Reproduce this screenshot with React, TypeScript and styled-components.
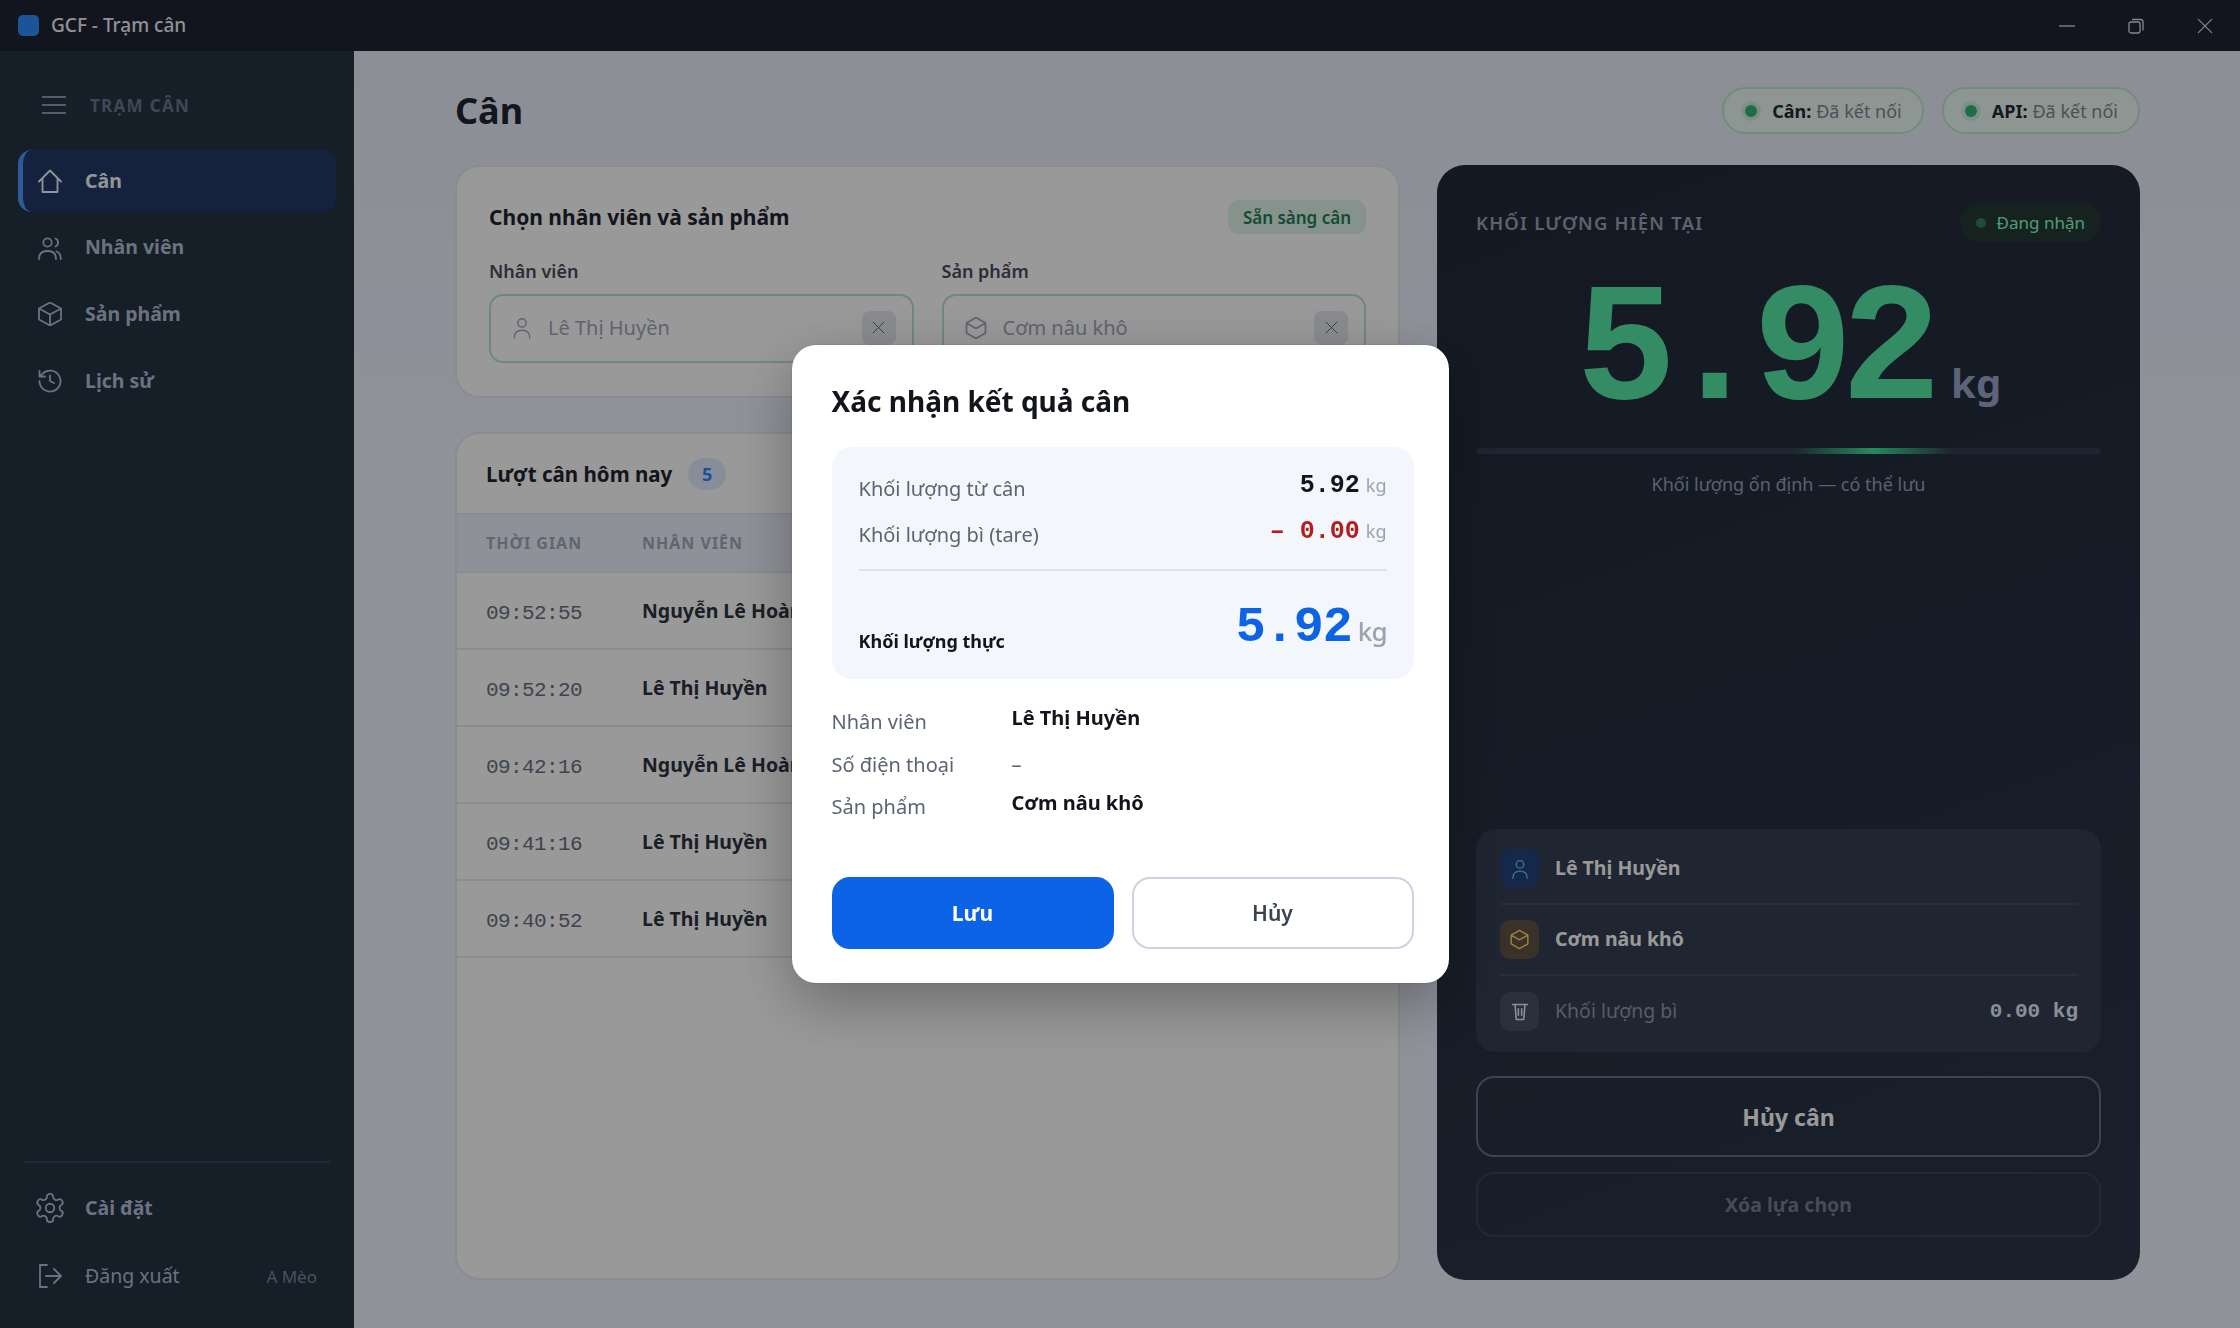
import React from "react";
import styled, {createGlobalStyle} from "styled-components";

const SANS = `"Noto Sans", "Liberation Sans", sans-serif`;
const MONO = `"Liberation Mono", "DejaVu Sans Mono", monospace`;

const GlobalStyle = createGlobalStyle`
  html, body {
    margin: 0;
    padding: 0;
    height: 100%;
    overflow: hidden;
    background: #eef3ff;
    font-family: ${SANS};
  }
  * {
    box-sizing: border-box;
  }
`;

const Stroke = ({size = 24, width = 1.8, children}: { size?: number; width?: number; children: React.ReactNode }) => (
    <svg width={size} height={size} viewBox="0 0 24 24" fill="none" stroke="currentColor" strokeWidth={width}
         strokeLinecap="round" strokeLinejoin="round">
        {children}
    </svg>
);

const HomeIcon = () => <Stroke><path d="M1 12.500 12 1.500 23 12.500M4.500 9.500V23h15V9.500"/></Stroke>;
const UsersIcon = () => (
    <Stroke>
        <circle cx="9.500" cy="6.500" r="4.200"/>
        <path d="M1 23c0-5.500 3.600-8 8.500-8s8.500 2.500 8.500 8M17.500 2.500a4.400 4.400 0 0 1 0 8M18.500 15.500c2.800.8 4.300 3.200 4.300 7.500"/>
    </Stroke>
);
const BoxIcon = () => <Stroke><path d="M12 .5 23 6.500v11L12 23.500 1 17.500v-11zM1 6.500l11 6 11-6M12 12.500v11"/></Stroke>;
const HistoryIcon = () => (
    <Stroke>
        <path d="M1.500 12a10.500 10.500 0 1 0 3.100-7.400L1.500 7.500M1.500 2v5.500H7M12 6.500V12l4 2"/>
    </Stroke>
);
const GearIcon = () => (
    <Stroke size={34} width={1.300}>
        <path d="M12.200 2h-.4a2 2 0 0 0-2 2v.2a2 2 0 0 1-1 1.700l-.4.300a2 2 0 0 1-2 0l-.2-.1a2 2 0 0 0-2.700.7l-.2.400a2 2 0 0 0 .7 2.700l.2.100a2 2 0 0 1 1 1.700v.5a2 2 0 0 1-1 1.700l-.2.100a2 2 0 0 0-.7 2.700l.2.400a2 2 0 0 0 2.700.7l.2-.1a2 2 0 0 1 2 0l.4.300a2 2 0 0 1 1 1.700v.2a2 2 0 0 0 2 2h.4a2 2 0 0 0 2-2v-.2a2 2 0 0 1 1-1.700l.4-.3a2 2 0 0 1 2 0l.2.100a2 2 0 0 0 2.700-.7l.2-.4a2 2 0 0 0-.7-2.700l-.2-.1a2 2 0 0 1-1-1.700v-.5a2 2 0 0 1 1-1.700l.2-.1a2 2 0 0 0 .7-2.700l-.2-.4a2 2 0 0 0-2.700-.7l-.2.100a2 2 0 0 1-2 0l-.4-.3a2 2 0 0 1-1-1.700V4a2 2 0 0 0-2-2z"/>
        <circle cx="12" cy="12" r="3"/>
    </Stroke>
);
const LogoutIcon = () => (
    <Stroke>
        <path d="M9 1H2v22h7M8 12h15M16 5l7 7-7 7"/>
    </Stroke>
);
const MenuIcon = () => <Stroke width={1.6}><path d="M0.500 4h23M0.500 12h23M0.500 20h23"/></Stroke>;
const PersonIcon = ({size = 22}: { size?: number }) => (
    <Stroke size={size} width={1.600}>
        <circle cx="12" cy="6.500" r="4.500"/>
        <path d="M3.500 23c0-6 3.500-8.500 8.500-8.500s8.500 2.500 8.500 8.500"/>
    </Stroke>
);
const ProductIcon = ({size = 24}: { size?: number }) => (
    <Stroke size={size} width={1.700}>
        <path d="M12 1.500 21.500 7v10L12 22.500 2.500 17V7zM2.500 7 12 12.500 21.500 7"/>
    </Stroke>
);
const TareIcon = () => (
    <Stroke size={20} width={1.900}>
        <path d="M3 3h18M6 3l1.500 18h9L18 3M10 8v8M14 8v8"/>
    </Stroke>
);
const CloseIcon = ({size = 13}: { size?: number }) => (
    <Stroke size={size} width={1.800}><path d="M2 2l20 20M22 2 2 22"/></Stroke>
);

const Shell = styled.div`
  display: flex;
  flex-direction: column;
  width: 2240px;
  height: 1328px;
`;

const TitleBar = styled.header`
  flex: 0 0 51px;
  display: flex;
  align-items: center;
  background: #1e2332;
  padding-left: 18px;
`;

const AppLogo = styled.span`
  width: 21px;
  height: 21px;
  border-radius: 5px;
  background: #2f8cff;
  margin-right: 12px;
`;

const AppTitle = styled.span`
  font-size: 19px;
  font-weight: 500;
  margin-bottom: 2px;
  color: #f0f2f8;
`;

const WindowControls = styled.div`
  margin-left: auto;
  display: flex;
  height: 100%;
  padding-right: 1px;
`;

const WindowButton = styled.span`
  width: 69px;
  display: flex;
  align-items: center;
  justify-content: center;
  color: #dfe3ee;
`;

const Body = styled.div`
  flex: 1;
  display: flex;
  min-height: 0;
`;

const Sidebar = styled.aside`
  flex: 0 0 354px;
  display: flex;
  flex-direction: column;
  background: #263244;
  padding: 24px 18px 21px;
`;

const SidebarHead = styled.div`
  height: 60px;
  display: flex;
  align-items: center;
  gap: 24px;
  padding-left: 24px;
  margin-bottom: 15px;
  color: #b2bed5;
`;

const SidebarLabel = styled.span`
  font-size: 17px;
  font-weight: 700;
  letter-spacing: 1.300px;
  color: #69788e;
`;

const NavList = styled.nav<{ $bottom?: boolean }>`
  display: flex;
  flex-direction: column;
  gap: ${p => (p.$bottom ? "6px" : "4.700px")};
`;

const NavItem = styled.a<{ $active?: boolean; $quiet?: boolean }>`
  height: 62px;
  display: flex;
  align-items: center;
  gap: 23px;
  padding: 0 19px 0 15px;
  border-radius: 14px;
  border-left: 5px solid ${p => (p.$active ? "#4d96ff" : "transparent")};
  background: ${p => (p.$active ? "#233a66" : "transparent")};
  color: ${p => (p.$active ? "#f5f7fb" : "#b2bed5")};
  font-size: 19.500px;
  font-weight: ${p => (p.$quiet ? 400 : 700)};
`;

const NavIcon = styled.span`
  width: 24px;
  height: 24px;
  display: flex;
  align-items: center;
  justify-content: center;

  svg {
    flex: none;
  }
`;

const NavText = styled.span`
  margin-bottom: 2px;
`;

const SidebarFoot = styled.div`
  margin-top: auto;
`;

const SidebarRule = styled.div`
  height: 2px;
  margin: 0 6px 14px;
  background: #3a4558;
`;

const UserName = styled.span`
  margin-left: auto;
  font-size: 17px;
  font-weight: 400;
  color: #7c889c;
`;

const Main = styled.main`
  flex: 1;
  display: flex;
  flex-direction: column;
  min-width: 0;
  padding: 36px 100px 48px 101px;
  background: linear-gradient(#e8edf8, #eef3ff 30%);
`;

const PageHead = styled.div`
  height: 47px;
  display: flex;
  align-items: center;
  justify-content: space-between;
  margin-bottom: 31px;
`;

const PageTitle = styled.h1`
  margin: 0;
  font-size: 36px;
  font-weight: 700;
  color: #212636;
`;

const StatusGroup = styled.div`
  display: flex;
  gap: 18px;
`;

const StatusPill = styled.div`
  height: 47px;
  display: flex;
  align-items: center;
  gap: 15px;
  padding: 0 20px 0 21px;
  border-radius: 24px;
  border: 2px solid #bfe8d0;
  background: #edfaf6;
  font-size: 18px;
  color: #7f8593;

  b {
    font-weight: 700;
    color: #252a34;
    margin-right: 5px;
  }
`;

const StatusDot = styled.span`
  width: 12px;
  height: 12px;
  border-radius: 50%;
  background: #2db776;
  box-shadow: 0 0 0 4px rgba(45, 183, 118, 0.15);
`;

const Columns = styled.div`
  flex: 1;
  display: grid;
  grid-template-columns: 945px 703px;
  gap: 37px;
  min-height: 0;
`;

const LeftColumn = styled.div`
  display: flex;
  flex-direction: column;
  gap: 34px;
  min-height: 0;
`;

const Card = styled.section`
  background: #fff;
  border: 2px solid #e6e9f3;
  border-radius: 24px;
`;

const PickCard = styled(Card)`
  padding: 33px 32px;
`;

const PickHead = styled.div`
  display: flex;
  align-items: center;
  justify-content: space-between;
  height: 34px;
  margin-bottom: 25px;
`;

const CardTitle = styled.h2<{ $small?: boolean }>`
  margin: 0;
  font-size: ${p => (p.$small ? "20.500px" : "21px")};
  font-weight: 700;
  color: #1f2530;
`;

const ReadyBadge = styled.span`
  height: 34px;
  padding: 0 15px;
  display: flex;
  align-items: center;
  border-radius: 10px;
  background: #dff5ea;
  font-size: 17px;
  font-weight: 600;
  color: #1f7c58;
`;

const Fields = styled.div`
  display: grid;
  grid-template-columns: 1fr 1fr;
  gap: 28px;
`;

const FieldLabel = styled.div`
  font-size: 18px;
  font-weight: 600;
  line-height: 24px;
  margin-bottom: 11px;
  color: #484e5d;
`;

const Picker = styled.div`
  height: 69px;
  display: flex;
  align-items: center;
  gap: 15px;
  padding: 0 16px 2px 20px;
  border: 2px solid #b8e4cc;
  border-radius: 14px;
  color: #a0a7b6;
  font-size: 20px;
`;

const ClearButton = styled.span`
  margin-left: auto;
  width: 34px;
  height: 34px;
  display: flex;
  align-items: center;
  justify-content: center;
  border-radius: 8px;
  background: #e6e8ef;
  color: #646a78;
`;

const HistoryCard = styled(Card)`
  flex: 1;
  overflow: hidden;
`;

const HistoryHead = styled.div`
  height: 81px;
  display: flex;
  align-items: center;
  gap: 16px;
  padding: 0 29px;
  border-bottom: 2px solid #e6e9f3;
`;

const CountBadge = styled.span`
  width: 38px;
  height: 32px;
  display: flex;
  align-items: center;
  justify-content: center;
  border-radius: 16px;
  background: #e1ebff;
  font-size: 18px;
  font-weight: 700;
  color: #3087ff;
`;

const Row = styled.div<{ $head?: boolean }>`
  display: grid;
  grid-template-columns: 156px 1fr;
  align-items: center;
  height: ${p => (p.$head ? "58px" : "77px")};
  padding: 0 29px;
  border-bottom: 2px solid #e6e9f3;
  background: ${p => (p.$head ? "#eef2fd" : "transparent")};
`;

const HeadCell = styled.span`
  font-size: 16px;
  font-weight: 700;
  letter-spacing: 1px;
  color: #9eaabe;
`;

const TimeCell = styled.span`
  font-family: ${MONO};
  font-size: 21px;
  letter-spacing: -0.600px;
  padding-top: 5px;
  color: #6b7184;
`;

const NameCell = styled.span`
  font-size: 19.500px;
  font-weight: 700;
  color: #2d3241;
  white-space: nowrap;
`;

const WeighPanel = styled.section`
  display: flex;
  flex-direction: column;
  padding: 38px 39px 43px;
  border-radius: 28px;
  background: linear-gradient(160deg, #212a39, #2b3549);
`;

const WeighHead = styled.div`
  display: flex;
  align-items: center;
  justify-content: space-between;
`;

const WeighLabel = styled.span`
  font-size: 18.500px;
  font-weight: 600;
  letter-spacing: 1.200px;
  color: #98a3bb;
`;

const LiveBadge = styled.span`
  height: 39px;
  display: flex;
  align-items: center;
  gap: 11px;
  padding: 0 16px;
  border-radius: 20px;
  background: #233a34;
  font-size: 17px;
  color: #84ffc8;
`;

const LiveDot = styled.span`
  width: 10px;
  height: 10px;
  border-radius: 50%;
  background: #347d5c;
`;

const Reading = styled.div`
  display: flex;
  align-items: baseline;
  justify-content: center;
  height: 168px;
  margin: 27px 0 11px;
`;

const ReadingValue = styled.span`
  font-family: ${MONO};
  font-size: 168px;
  line-height: 168px;
  font-weight: 700;
  letter-spacing: -12.500px;
  color: #58e9a7;
`;

const ReadingUnit = styled.span`
  font-size: 40px;
  font-weight: 700;
  color: #98a7c8;
  margin-left: 22px;
`;

const Meter = styled.div`
  position: relative;
  height: 6px;
  border-radius: 3px;
  background: #343e50;
  overflow: hidden;
`;

const MeterGlow = styled.span`
  position: absolute;
  top: 0;
  bottom: 0;
  left: 51%;
  width: 25%;
  background: linear-gradient(90deg, transparent, #3fe79a, transparent);
`;

const Hint = styled.p`
  margin: 17px 0 0;
  text-align: center;
  font-size: 18px;
  line-height: 26px;
  color: #96a2bb;
`;

const InfoBox = styled.div`
  margin-top: auto;
  padding: 5px 23px 5px 24px;
  border-radius: 20px;
  background: #343f52;
`;

const InfoRow = styled.div`
  display: flex;
  align-items: center;
  gap: 16px;
  height: 71px;
  border-bottom: 2px solid #434d60;

  &:last-child {
    border-bottom: 0;
  }
`;

const InfoIcon = styled.span<{ $tone: string; $ink: string }>`
  width: 39px;
  height: 39px;
  display: flex;
  align-items: center;
  justify-content: center;
  border-radius: 10px;
  background: ${p => p.$tone};
  color: ${p => p.$ink};
`;

const InfoText = styled.span<{ $dim?: boolean }>`
  font-size: 19.500px;
  font-weight: ${p => (p.$dim ? 400 : 700)};
  margin-bottom: 2px;
  color: ${p => (p.$dim ? "#8f99af" : "#fff")};
`;

const InfoValue = styled.span`
  margin-left: auto;
  font-family: ${MONO};
  font-size: 21px;
  font-weight: 700;
  color: #e6eeff;
`;

const GhostButton = styled.button<{ $faint?: boolean }>`
  width: 100%;
  height: ${p => (p.$faint ? "65px" : "81px")};
  margin-top: ${p => (p.$faint ? "15px" : "24px")};
  border: 2px solid ${p => (p.$faint ? "#3a4458" : "#646e85")};
  border-radius: 18px;
  background: transparent;
  font-family: ${SANS};
  font-size: ${p => (p.$faint ? "19.500px" : "23px")};
  font-weight: 700;
  color: ${p => (p.$faint ? "#767f91" : "#fff")};
`;

const Backdrop = styled.div`
  position: fixed;
  inset: 0;
  display: flex;
  align-items: center;
  justify-content: center;
  background: rgba(0, 0, 0, 0.4);
`;

const Modal = styled.div`
  width: 657px;
  height: 638px;
  padding: 36px 35px 0 40px;
  border-radius: 24px;
  background: #fff;
  box-shadow: 0 20px 60px rgba(0, 0, 0, 0.3), 0 0 0 1px rgba(0, 0, 0, 0.05);
`;

const ModalTitle = styled.h2`
  margin: 0 0 26px;
  font-size: 28px;
  line-height: 40px;
  font-weight: 700;
  color: #12151c;
`;

const Summary = styled.div`
  height: 232px;
  padding: 18px 27px 0;
  border-radius: 20px;
  background: #f3f6fb;
`;

const SummaryRow = styled.div`
  height: 46px;
  display: flex;
  align-items: center;
  justify-content: space-between;
  font-size: 20px;
  color: #5b6473;
`;

const SummaryValue = styled.span<{ $minus?: boolean }>`
  display: flex;
  align-items: baseline;
  gap: 6px;
  margin-top: -6px;
  font-family: ${MONO};
  font-size: 25px;
  font-weight: 700;
  color: ${p => (p.$minus ? "#b51c1c" : "#12151c")};
`;

const SummaryUnit = styled.small<{ $big?: boolean }>`
  font-family: ${SANS};
  font-size: ${p => (p.$big ? "26px" : "18px")};
  font-weight: ${p => (p.$big ? 500 : 400)};
  color: #9aa3b2;
`;

const SummaryRule = styled.div`
  height: 2px;
  margin-top: 12px;
  background: #dde3ec;
`;

const TotalRow = styled.div`
  display: flex;
  align-items: flex-end;
  justify-content: space-between;
  margin-top: 27px;
`;

const TotalLabel = styled.span`
  font-size: 18px;
  line-height: 26px;
  margin-bottom: 7px;
  font-weight: 700;
  color: #12151c;
`;

const TotalValue = styled.span`
  display: flex;
  align-items: baseline;
  gap: 6px;
  font-family: ${MONO};
  font-size: 50px;
  line-height: 60px;
  font-weight: 700;
  letter-spacing: -1px;
  color: #0e63e5;
`;

const Details = styled.dl`
  display: grid;
  grid-template-columns: 180px 1fr;
  grid-auto-rows: 42.500px;
  margin: 21px 0 49px;
  font-size: 20px;
`;

const DetailName = styled.dt`
  margin: 0;
  line-height: 43px;
  color: #5b6473;
`;

const DetailValue = styled.dd<{ $empty?: boolean }>`
  margin: 0;
  line-height: ${p => (p.$empty ? "43px" : "35px")};
  font-weight: ${p => (p.$empty ? 400 : 700)};
  color: ${p => (p.$empty ? "#5b6473" : "#12151c")};
`;

const ModalActions = styled.div`
  display: grid;
  grid-template-columns: 1fr 1fr;
  gap: 18px;
`;

const ModalButton = styled.button<{ $primary?: boolean }>`
  height: 72px;
  border-radius: 18px;
  border: 2px solid ${p => (p.$primary ? "#0d63e5" : "#cdd3e0")};
  background: ${p => (p.$primary ? "#0d63e5" : "#fff")};
  font-family: ${SANS};
  font-size: 21px;
  font-weight: ${p => (p.$primary ? 700 : 600)};
  color: ${p => (p.$primary ? "#fff" : "#3b4350")};
`;

const HISTORY = [
    {time: "09:52:55", name: "Nguyễn Lê Hoàng"},
    {time: "09:52:20", name: "Lê Thị Huyền"},
    {time: "09:42:16", name: "Nguyễn Lê Hoàng"},
    {time: "09:41:16", name: "Lê Thị Huyền"},
    {time: "09:40:52", name: "Lê Thị Huyền"},
];

const App = () => (
    <>
        <GlobalStyle/>
        <Shell>
            <TitleBar>
                <AppLogo/>
                <AppTitle>GCF - Trạm cân</AppTitle>
                <WindowControls>
                    <WindowButton>
                        <svg width="16" height="16" viewBox="0 0 16 16" stroke="currentColor" strokeWidth="1.3">
                            <path d="M0 8h16"/>
                        </svg>
                    </WindowButton>
                    <WindowButton>
                        <svg width="16" height="16" viewBox="0 0 16 16" fill="none" stroke="currentColor" strokeWidth="1.3">
                            <rect x="1" y="4" width="11" height="11" rx="2"/>
                            <path d="M4 1.500h8.500a2.500 2.500 0 0 1 2.500 2.500v8.500"/>
                        </svg>
                    </WindowButton>
                    <WindowButton>
                        <CloseIcon size={16}/>
                    </WindowButton>
                </WindowControls>
            </TitleBar>
            <Body>
                <Sidebar>
                    <SidebarHead>
                        <MenuIcon/>
                        <SidebarLabel>TRẠM CÂN</SidebarLabel>
                    </SidebarHead>
                    <NavList>
                        <NavItem $active><NavIcon><HomeIcon/></NavIcon><NavText>Cân</NavText></NavItem>
                        <NavItem><NavIcon><UsersIcon/></NavIcon><NavText>Nhân viên</NavText></NavItem>
                        <NavItem><NavIcon><BoxIcon/></NavIcon><NavText>Sản phẩm</NavText></NavItem>
                        <NavItem><NavIcon><HistoryIcon/></NavIcon><NavText>Lịch sử</NavText></NavItem>
                    </NavList>
                    <SidebarFoot>
                        <SidebarRule/>
                        <NavList $bottom>
                            <NavItem><NavIcon><GearIcon/></NavIcon><NavText>Cài đặt</NavText></NavItem>
                            <NavItem $quiet>
                                <NavIcon><LogoutIcon/></NavIcon><NavText>Đăng xuất</NavText>
                                <UserName>A Mèo</UserName>
                            </NavItem>
                        </NavList>
                    </SidebarFoot>
                </Sidebar>
                <Main>
                    <PageHead>
                        <PageTitle>Cân</PageTitle>
                        <StatusGroup>
                            <StatusPill><StatusDot/><span><b>Cân:</b>Đã kết nối</span></StatusPill>
                            <StatusPill><StatusDot/><span><b>API:</b>Đã kết nối</span></StatusPill>
                        </StatusGroup>
                    </PageHead>
                    <Columns>
                        <LeftColumn>
                            <PickCard>
                                <PickHead>
                                    <CardTitle>Chọn nhân viên và sản phẩm</CardTitle>
                                    <ReadyBadge>Sẵn sàng cân</ReadyBadge>
                                </PickHead>
                                <Fields>
                                    <div>
                                        <FieldLabel>Nhân viên</FieldLabel>
                                        <Picker>
                                            <PersonIcon/>Lê Thị Huyền
                                            <ClearButton><CloseIcon/></ClearButton>
                                        </Picker>
                                    </div>
                                    <div>
                                        <FieldLabel>Sản phẩm</FieldLabel>
                                        <Picker>
                                            <ProductIcon/>Cơm nâu khô
                                            <ClearButton><CloseIcon/></ClearButton>
                                        </Picker>
                                    </div>
                                </Fields>
                            </PickCard>
                            <HistoryCard>
                                <HistoryHead>
                                    <CardTitle $small>Lượt cân hôm nay</CardTitle>
                                    <CountBadge>5</CountBadge>
                                </HistoryHead>
                                <Row $head>
                                    <HeadCell>THỜI GIAN</HeadCell>
                                    <HeadCell>NHÂN VIÊN</HeadCell>
                                </Row>
                                {HISTORY.map(item => (
                                    <Row key={item.time}>
                                        <TimeCell>{item.time}</TimeCell>
                                        <NameCell>{item.name}</NameCell>
                                    </Row>
                                ))}
                            </HistoryCard>
                        </LeftColumn>
                        <WeighPanel>
                            <WeighHead>
                                <WeighLabel>KHỐI LƯỢNG HIỆN TẠI</WeighLabel>
                                <LiveBadge><LiveDot/>Đang nhận</LiveBadge>
                            </WeighHead>
                            <Reading>
                                <ReadingValue>5.92</ReadingValue>
                                <ReadingUnit>kg</ReadingUnit>
                            </Reading>
                            <Meter><MeterGlow/></Meter>
                            <Hint>Khối lượng ổn định — có thể lưu</Hint>
                            <InfoBox>
                                <InfoRow>
                                    <InfoIcon $tone="#25447b" $ink="#69b9ff"><PersonIcon size={20}/></InfoIcon>
                                    <InfoText>Lê Thị Huyền</InfoText>
                                </InfoRow>
                                <InfoRow>
                                    <InfoIcon $tone="#615343" $ink="#ffd466"><ProductIcon size={21}/></InfoIcon>
                                    <InfoText>Cơm nâu khô</InfoText>
                                </InfoRow>
                                <InfoRow>
                                    <InfoIcon $tone="#465064" $ink="#e6eeff"><TareIcon/></InfoIcon>
                                    <InfoText $dim>Khối lượng bì</InfoText>
                                    <InfoValue>0.00 kg</InfoValue>
                                </InfoRow>
                            </InfoBox>
                            <GhostButton>Hủy cân</GhostButton>
                            <GhostButton $faint>Xóa lựa chọn</GhostButton>
                        </WeighPanel>
                    </Columns>
                </Main>
            </Body>
        </Shell>
        <Backdrop>
            <Modal>
                <ModalTitle>Xác nhận kết quả cân</ModalTitle>
                <Summary>
                    <SummaryRow>
                        Khối lượng từ cân
                        <SummaryValue>5.92<SummaryUnit>kg</SummaryUnit></SummaryValue>
                    </SummaryRow>
                    <SummaryRow>
                        Khối lượng bì (tare)
                        <SummaryValue $minus>– 0.00<SummaryUnit>kg</SummaryUnit></SummaryValue>
                    </SummaryRow>
                    <SummaryRule/>
                    <TotalRow>
                        <TotalLabel>Khối lượng thực</TotalLabel>
                        <TotalValue>5.92<SummaryUnit $big>kg</SummaryUnit></TotalValue>
                    </TotalRow>
                </Summary>
                <Details>
                    <DetailName>Nhân viên</DetailName>
                    <DetailValue>Lê Thị Huyền</DetailValue>
                    <DetailName>Số điện thoại</DetailName>
                    <DetailValue $empty>–</DetailValue>
                    <DetailName>Sản phẩm</DetailName>
                    <DetailValue>Cơm nâu khô</DetailValue>
                </Details>
                <ModalActions>
                    <ModalButton $primary>Lưu</ModalButton>
                    <ModalButton>Hủy</ModalButton>
                </ModalActions>
            </Modal>
        </Backdrop>
    </>
);

export default App;
